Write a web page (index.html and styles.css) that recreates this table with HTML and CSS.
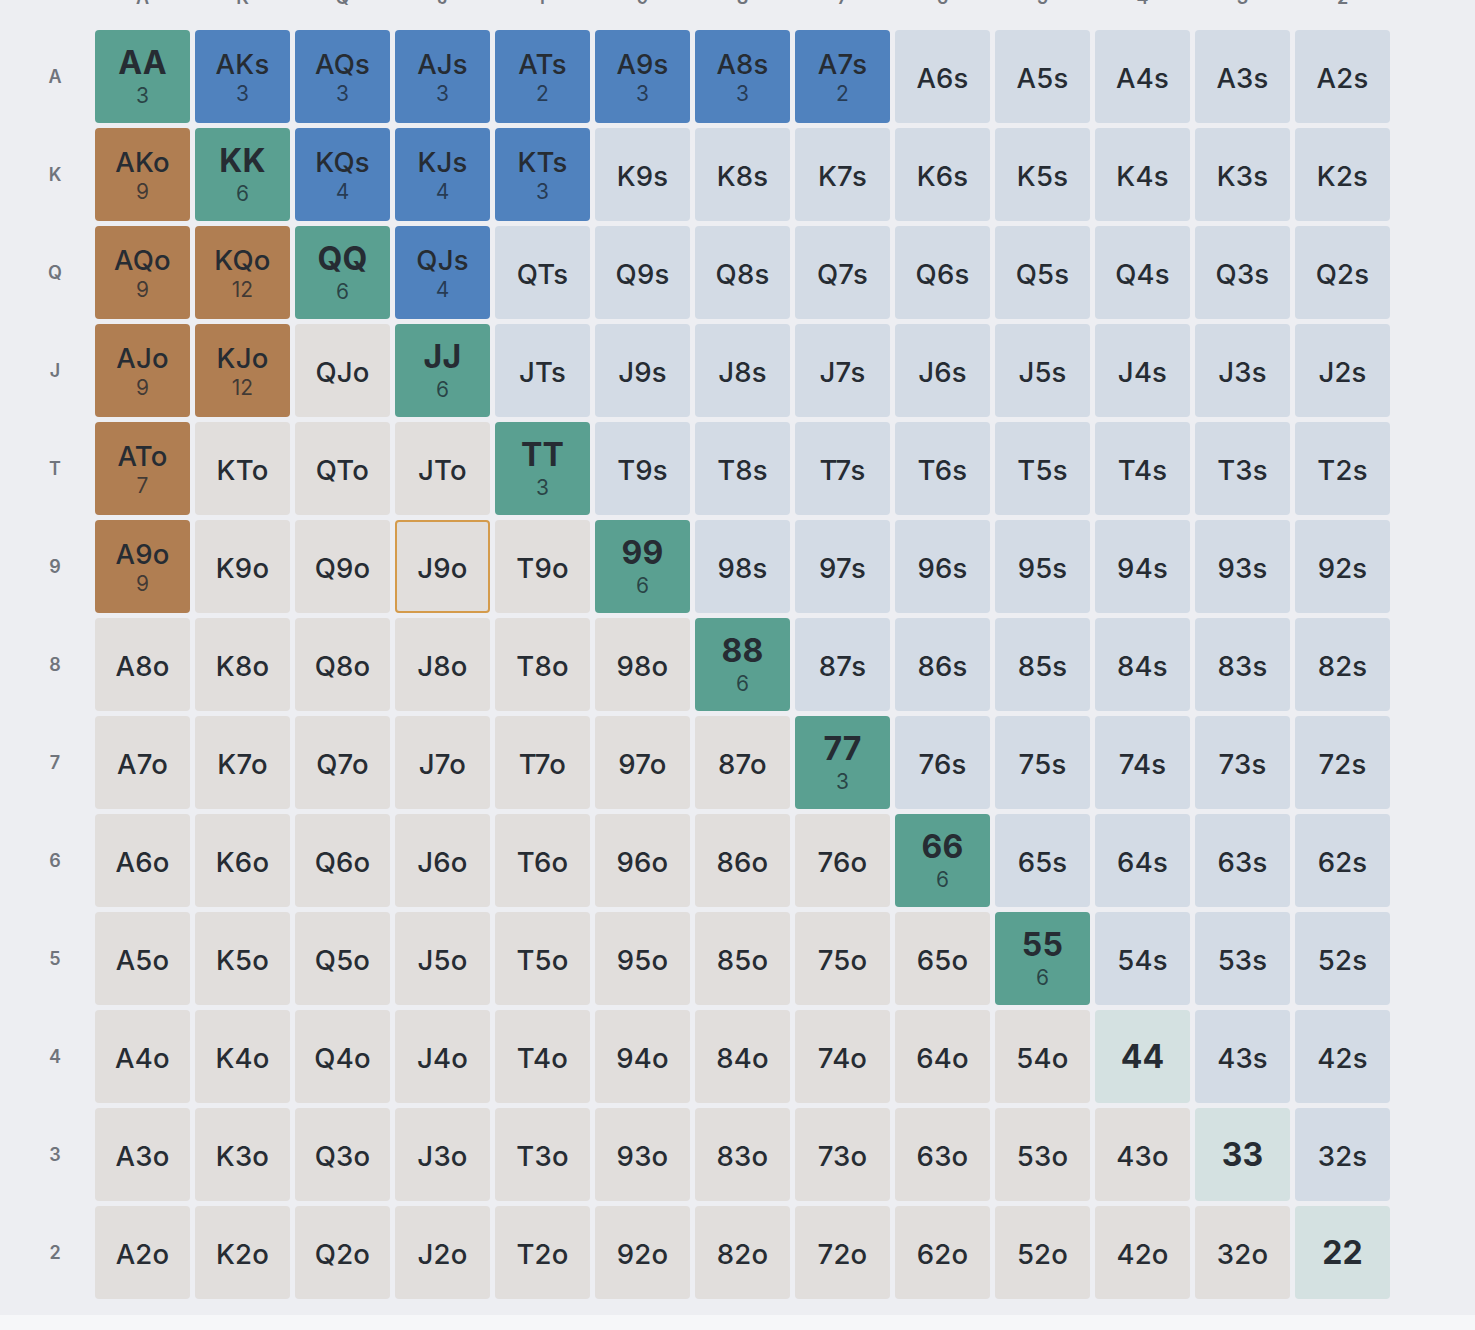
FILE: index.html
```html
<!DOCTYPE html>
<html lang="en">
<head>
<meta charset="utf-8">
<title>Range grid</title>
<link rel="stylesheet" href="styles.css">
</head>
<body>
<main class="board">
  <div class="grid">
    <div class="ch"></div>
    <div class="ch">A</div><div class="ch">K</div><div class="ch">Q</div><div class="ch">J</div><div class="ch">T</div><div class="ch">9</div><div class="ch">8</div><div class="ch">7</div><div class="ch">6</div><div class="ch">5</div><div class="ch">4</div><div class="ch">3</div><div class="ch">2</div>

    <div class="rh">A</div>
    <div class="c g"><span class="h pr">AA</span><span class="n">3</span></div>
    <div class="c b"><span class="h">AKs</span><span class="n">3</span></div>
    <div class="c b"><span class="h">AQs</span><span class="n">3</span></div>
    <div class="c b"><span class="h">AJs</span><span class="n">3</span></div>
    <div class="c b"><span class="h">ATs</span><span class="n">2</span></div>
    <div class="c b"><span class="h">A9s</span><span class="n">3</span></div>
    <div class="c b"><span class="h">A8s</span><span class="n">3</span></div>
    <div class="c b"><span class="h">A7s</span><span class="n">2</span></div>
    <div class="c s"><span class="h">A6s</span></div>
    <div class="c s"><span class="h">A5s</span></div>
    <div class="c s"><span class="h">A4s</span></div>
    <div class="c s"><span class="h">A3s</span></div>
    <div class="c s"><span class="h">A2s</span></div>

    <div class="rh">K</div>
    <div class="c r"><span class="h">AKo</span><span class="n">9</span></div>
    <div class="c g"><span class="h pr">KK</span><span class="n">6</span></div>
    <div class="c b"><span class="h">KQs</span><span class="n">4</span></div>
    <div class="c b"><span class="h">KJs</span><span class="n">4</span></div>
    <div class="c b"><span class="h">KTs</span><span class="n">3</span></div>
    <div class="c s"><span class="h">K9s</span></div>
    <div class="c s"><span class="h">K8s</span></div>
    <div class="c s"><span class="h">K7s</span></div>
    <div class="c s"><span class="h">K6s</span></div>
    <div class="c s"><span class="h">K5s</span></div>
    <div class="c s"><span class="h">K4s</span></div>
    <div class="c s"><span class="h">K3s</span></div>
    <div class="c s"><span class="h">K2s</span></div>

    <div class="rh">Q</div>
    <div class="c r"><span class="h">AQo</span><span class="n">9</span></div>
    <div class="c r"><span class="h">KQo</span><span class="n">12</span></div>
    <div class="c g"><span class="h pr">QQ</span><span class="n">6</span></div>
    <div class="c b"><span class="h">QJs</span><span class="n">4</span></div>
    <div class="c s"><span class="h">QTs</span></div>
    <div class="c s"><span class="h">Q9s</span></div>
    <div class="c s"><span class="h">Q8s</span></div>
    <div class="c s"><span class="h">Q7s</span></div>
    <div class="c s"><span class="h">Q6s</span></div>
    <div class="c s"><span class="h">Q5s</span></div>
    <div class="c s"><span class="h">Q4s</span></div>
    <div class="c s"><span class="h">Q3s</span></div>
    <div class="c s"><span class="h">Q2s</span></div>

    <div class="rh">J</div>
    <div class="c r"><span class="h">AJo</span><span class="n">9</span></div>
    <div class="c r"><span class="h">KJo</span><span class="n">12</span></div>
    <div class="c o"><span class="h">QJo</span></div>
    <div class="c g"><span class="h pr">JJ</span><span class="n">6</span></div>
    <div class="c s"><span class="h">JTs</span></div>
    <div class="c s"><span class="h">J9s</span></div>
    <div class="c s"><span class="h">J8s</span></div>
    <div class="c s"><span class="h">J7s</span></div>
    <div class="c s"><span class="h">J6s</span></div>
    <div class="c s"><span class="h">J5s</span></div>
    <div class="c s"><span class="h">J4s</span></div>
    <div class="c s"><span class="h">J3s</span></div>
    <div class="c s"><span class="h">J2s</span></div>

    <div class="rh">T</div>
    <div class="c r"><span class="h">ATo</span><span class="n">7</span></div>
    <div class="c o"><span class="h">KTo</span></div>
    <div class="c o"><span class="h">QTo</span></div>
    <div class="c o"><span class="h">JTo</span></div>
    <div class="c g"><span class="h pr">TT</span><span class="n">3</span></div>
    <div class="c s"><span class="h">T9s</span></div>
    <div class="c s"><span class="h">T8s</span></div>
    <div class="c s"><span class="h">T7s</span></div>
    <div class="c s"><span class="h">T6s</span></div>
    <div class="c s"><span class="h">T5s</span></div>
    <div class="c s"><span class="h">T4s</span></div>
    <div class="c s"><span class="h">T3s</span></div>
    <div class="c s"><span class="h">T2s</span></div>

    <div class="rh">9</div>
    <div class="c r"><span class="h">A9o</span><span class="n">9</span></div>
    <div class="c o"><span class="h">K9o</span></div>
    <div class="c o"><span class="h">Q9o</span></div>
    <div class="c o sel"><span class="h">J9o</span></div>
    <div class="c o"><span class="h">T9o</span></div>
    <div class="c g"><span class="h pr">99</span><span class="n">6</span></div>
    <div class="c s"><span class="h">98s</span></div>
    <div class="c s"><span class="h">97s</span></div>
    <div class="c s"><span class="h">96s</span></div>
    <div class="c s"><span class="h">95s</span></div>
    <div class="c s"><span class="h">94s</span></div>
    <div class="c s"><span class="h">93s</span></div>
    <div class="c s"><span class="h">92s</span></div>

    <div class="rh">8</div>
    <div class="c o"><span class="h">A8o</span></div>
    <div class="c o"><span class="h">K8o</span></div>
    <div class="c o"><span class="h">Q8o</span></div>
    <div class="c o"><span class="h">J8o</span></div>
    <div class="c o"><span class="h">T8o</span></div>
    <div class="c o"><span class="h">98o</span></div>
    <div class="c g"><span class="h pr">88</span><span class="n">6</span></div>
    <div class="c s"><span class="h">87s</span></div>
    <div class="c s"><span class="h">86s</span></div>
    <div class="c s"><span class="h">85s</span></div>
    <div class="c s"><span class="h">84s</span></div>
    <div class="c s"><span class="h">83s</span></div>
    <div class="c s"><span class="h">82s</span></div>

    <div class="rh">7</div>
    <div class="c o"><span class="h">A7o</span></div>
    <div class="c o"><span class="h">K7o</span></div>
    <div class="c o"><span class="h">Q7o</span></div>
    <div class="c o"><span class="h">J7o</span></div>
    <div class="c o"><span class="h">T7o</span></div>
    <div class="c o"><span class="h">97o</span></div>
    <div class="c o"><span class="h">87o</span></div>
    <div class="c g"><span class="h pr">77</span><span class="n">3</span></div>
    <div class="c s"><span class="h">76s</span></div>
    <div class="c s"><span class="h">75s</span></div>
    <div class="c s"><span class="h">74s</span></div>
    <div class="c s"><span class="h">73s</span></div>
    <div class="c s"><span class="h">72s</span></div>

    <div class="rh">6</div>
    <div class="c o"><span class="h">A6o</span></div>
    <div class="c o"><span class="h">K6o</span></div>
    <div class="c o"><span class="h">Q6o</span></div>
    <div class="c o"><span class="h">J6o</span></div>
    <div class="c o"><span class="h">T6o</span></div>
    <div class="c o"><span class="h">96o</span></div>
    <div class="c o"><span class="h">86o</span></div>
    <div class="c o"><span class="h">76o</span></div>
    <div class="c g"><span class="h pr">66</span><span class="n">6</span></div>
    <div class="c s"><span class="h">65s</span></div>
    <div class="c s"><span class="h">64s</span></div>
    <div class="c s"><span class="h">63s</span></div>
    <div class="c s"><span class="h">62s</span></div>

    <div class="rh">5</div>
    <div class="c o"><span class="h">A5o</span></div>
    <div class="c o"><span class="h">K5o</span></div>
    <div class="c o"><span class="h">Q5o</span></div>
    <div class="c o"><span class="h">J5o</span></div>
    <div class="c o"><span class="h">T5o</span></div>
    <div class="c o"><span class="h">95o</span></div>
    <div class="c o"><span class="h">85o</span></div>
    <div class="c o"><span class="h">75o</span></div>
    <div class="c o"><span class="h">65o</span></div>
    <div class="c g"><span class="h pr">55</span><span class="n">6</span></div>
    <div class="c s"><span class="h">54s</span></div>
    <div class="c s"><span class="h">53s</span></div>
    <div class="c s"><span class="h">52s</span></div>

    <div class="rh">4</div>
    <div class="c o"><span class="h">A4o</span></div>
    <div class="c o"><span class="h">K4o</span></div>
    <div class="c o"><span class="h">Q4o</span></div>
    <div class="c o"><span class="h">J4o</span></div>
    <div class="c o"><span class="h">T4o</span></div>
    <div class="c o"><span class="h">94o</span></div>
    <div class="c o"><span class="h">84o</span></div>
    <div class="c o"><span class="h">74o</span></div>
    <div class="c o"><span class="h">64o</span></div>
    <div class="c o"><span class="h">54o</span></div>
    <div class="c p"><span class="h pr">44</span></div>
    <div class="c s"><span class="h">43s</span></div>
    <div class="c s"><span class="h">42s</span></div>

    <div class="rh">3</div>
    <div class="c o"><span class="h">A3o</span></div>
    <div class="c o"><span class="h">K3o</span></div>
    <div class="c o"><span class="h">Q3o</span></div>
    <div class="c o"><span class="h">J3o</span></div>
    <div class="c o"><span class="h">T3o</span></div>
    <div class="c o"><span class="h">93o</span></div>
    <div class="c o"><span class="h">83o</span></div>
    <div class="c o"><span class="h">73o</span></div>
    <div class="c o"><span class="h">63o</span></div>
    <div class="c o"><span class="h">53o</span></div>
    <div class="c o"><span class="h">43o</span></div>
    <div class="c p"><span class="h pr">33</span></div>
    <div class="c s"><span class="h">32s</span></div>

    <div class="rh">2</div>
    <div class="c o"><span class="h">A2o</span></div>
    <div class="c o"><span class="h">K2o</span></div>
    <div class="c o"><span class="h">Q2o</span></div>
    <div class="c o"><span class="h">J2o</span></div>
    <div class="c o"><span class="h">T2o</span></div>
    <div class="c o"><span class="h">92o</span></div>
    <div class="c o"><span class="h">82o</span></div>
    <div class="c o"><span class="h">72o</span></div>
    <div class="c o"><span class="h">62o</span></div>
    <div class="c o"><span class="h">52o</span></div>
    <div class="c o"><span class="h">42o</span></div>
    <div class="c o"><span class="h">32o</span></div>
    <div class="c p"><span class="h pr">22</span></div>
  </div>
</main>
</body>
</html>
```

FILE: styles.css
```css
html, body {
  margin: 0;
  padding: 0;
}
body {
  background: #f6f7f9;
  font-family: Inter, "Noto Sans", "Liberation Sans", sans-serif;
  color: #262c33;
}
.board {
  background: #edeef2;
  margin-top: -14.5px;
  padding: 0 0 16px 35px;
}
.grid {
  display: grid;
  grid-template-columns: 55px repeat(13, 95px);
  grid-template-rows: 39px repeat(13, 93px);
  column-gap: 5px;
  row-gap: 5px;
}
.ch {
  height: 24px;
  line-height: 24px;
  text-align: center;
  font-size: 18px;
  font-weight: 600;
  color: #70747c;
}
.rh {
  display: flex;
  align-items: center;
  justify-content: center;
  padding-right: 15px;
  font-size: 18px;
  font-weight: 600;
  color: #70747c;
}
.c {
  box-sizing: border-box;
  border-radius: 4px;
  display: flex;
  flex-direction: column;
  align-items: center;
  justify-content: center;
  padding-top: 3px;
}
.h {
  font-size: 27.5px;
  font-weight: 500;
  line-height: 32px;
  letter-spacing: 0.2px;
}
.h.pr {
  font-size: 32px;
  font-weight: 700;
  line-height: 38px;
  margin-top: -2px;
}
.n {
  font-size: 21px;
  font-weight: 400;
  line-height: 28px;
  color: rgba(22, 32, 42, 0.72);
}
.s { background: #d3dbe5; }
.o { background: #e1dedc; }
.p { background: #d4e1e1; }
.g { background: #5aa091; }
.b { background: #5082be; }
.r { background: #b07e52; }
.sel { border: 2px solid #d49b4c; }
```
